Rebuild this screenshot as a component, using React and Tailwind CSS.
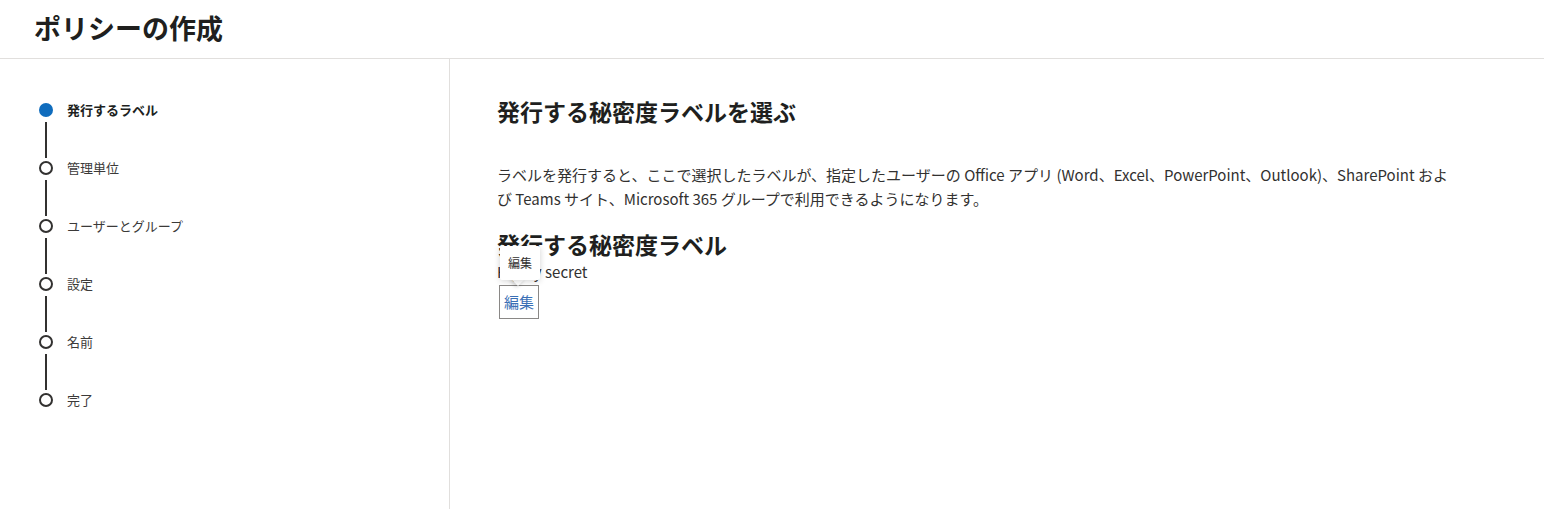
import React from "react";

const steps = ["発行するラベル", "管理単位", "ユーザーとグループ", "設定", "名前", "完了"];

export default function App() {
  return (
    <div
      className="w-[1544px] h-[509px] bg-white text-[#323130] flex flex-col overflow-hidden"
      style={{ fontFamily: '"Segoe UI", "Noto Sans CJK JP", sans-serif' }}
    >
      <header className="h-[59px] shrink-0 border-b border-[#e1dfdd] flex items-center pl-[34px]">
        <h1 className="text-[27px] font-semibold leading-[36px] text-[#201f1e] mt-[-2px]">ポリシーの作成</h1>
      </header>
      <div className="flex flex-1 min-h-0">
        <aside className="w-[450px] shrink-0 border-r border-[#e1dfdd] pt-[44px] pl-[39px]">
          {steps.map((s, i) => (
            <div key={s}>
              <div className="flex items-center h-[14px]">
                {i === 0 ? (
                  <span className="w-[14px] h-[14px] rounded-full bg-[#0f6cbd] shrink-0" />
                ) : (
                  <span className="w-[14px] h-[14px] rounded-full border-2 border-[#323130] bg-white shrink-0" />
                )}
                <span
                  className={
                    "ml-[14px] text-[13px] leading-[20px] whitespace-nowrap " +
                    (i === 0 ? "font-semibold text-[#201f1e]" : "text-[#3b3a39]")
                  }
                >
                  {s}
                </span>
              </div>
              {i < steps.length - 1 && (
                <div className="w-[2px] h-[36px] bg-[#323130] ml-[6px] mt-[5px] mb-[3px]" />
              )}
            </div>
          ))}
        </aside>
        <main className="flex-1 pl-[47px] pt-[36px]">
          <h2 className="text-[23px] font-semibold leading-[32px] text-[#201f1e]">発行する秘密度ラベルを選ぶ</h2>
          <p className="mt-[36px] w-[960px] text-[15px] leading-[24px] text-[#323130]">
            ラベルを発行すると、ここで選択したラベルが、指定したユーザーの Office アプリ (Word、Excel、PowerPoint、Outlook)、SharePoint および Teams サイト、Microsoft 365 グループで利用できるようになります。
          </p>
          <h3 className="mt-[17px] text-[23px] font-semibold leading-[32px] text-[#201f1e]">発行する秘密度ラベル</h3>
          <div className="mt-[2px] text-[15px] leading-[20px] text-[#323130]">Highly secret</div>
          <div className="relative mt-[3px] ml-[2px] w-[40px]">
            <button className="w-[40px] h-[34px] border border-[#8a8886] bg-white text-[15px] text-[#3a6fb5] flex items-center justify-center">
              編集
            </button>
            <div className="absolute left-[1px] bottom-[39px] w-[40px] h-[34px]">
              <div className="absolute left-[13px] top-[28px] w-[10px] h-[10px] rotate-45 bg-white shadow-[0_2px_4px_rgba(0,0,0,0.18)]" />
              <div className="relative w-full h-full bg-white rounded-[2px] shadow-[0_1px_6px_rgba(0,0,0,0.18)] flex items-center justify-center text-[12px] text-[#323130]">
                編集
              </div>
            </div>
          </div>
        </main>
      </div>
    </div>
  );
}
